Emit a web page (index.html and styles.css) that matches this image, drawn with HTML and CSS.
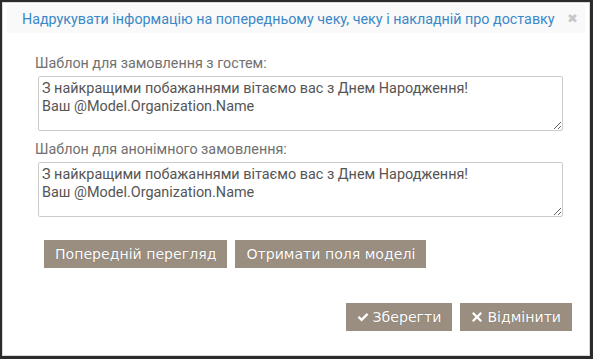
FILE: index.html
```html
<!DOCTYPE html>
<html lang="uk">
<head>
    <meta charset="UTF-8">
    <title>Друк інформації</title>
    <link rel="stylesheet" href="styles.css">
</head>
<body>
    <div class="modal">
        <div class="modal-header">
            <h4>Надрукувати інформацію на попередньому чеку, чеку і накладній про доставку</h4>
            <span class="close">&#x2716;</span>
        </div>

        <div class="modal-body">
            <div class="form-group">
                <label>Шаблон для замовлення з гостем:</label>
                <textarea>З найкращими побажаннями вітаємо вас з Днем Народження!
Ваш @Model.Organization.Name</textarea>
            </div>
            <div class="form-group">
                <label>Шаблон для анонімного замовлення:</label>
                <textarea>З найкращими побажаннями вітаємо вас з Днем Народження!
Ваш @Model.Organization.Name</textarea>
            </div>
            <div class="tools">
                <button class="btn">Попередній перегляд</button>
                <button class="btn">Отримати поля моделі</button>
            </div>
        </div>

        <div class="modal-footer">
            <button class="btn">
                <svg class="icon" viewBox="0 0 12 12"><path d="M0.6 6.6 L2.3 4.9 L4.6 7.2 L9.7 2 L11.4 3.7 L4.6 10.5 Z" fill="#fff"/></svg>Зберегти
            </button>
            <button class="btn">
                <svg class="icon" viewBox="0 0 12 12"><path d="M2.5 1 L6 4.4 L9.5 1 L11 2.5 L7.6 6 L11 9.5 L9.5 11 L6 7.6 L2.5 11 L1 9.5 L4.4 6 L1 2.5 Z" fill="#fff"/></svg>Відмінити
            </button>
        </div>
    </div>
</body>
</html>
```

FILE: styles.css
```css
body {
    margin: 0;
    background: #2b2b2b;
    font-family: Roboto, "Liberation Sans", sans-serif;
}
.modal {
    margin: 2px 2px 0 2px;
    width: 586px;
    height: 352px;
    background: #fff;
    border: 1px solid #d8d8d8;
    display: flex;
    flex-direction: column;
}
.modal-header {
    margin: 1px 4px 0 4px;
    height: 29px;
    background: #f9f9f9;
    padding: 0 7px 0 15px;
    display: flex;
    align-items: center;
    justify-content: space-between;
}
.modal-header h4 {
    margin: 0;
    font-size: 14.3px;
    font-weight: normal;
    white-space: nowrap;
    color: #3a88c8;
}
.close {
    color: #c8c8c8;
    font-size: 13px;
    font-family: "DejaVu Sans", sans-serif;
}
.modal-body {
    padding: 20px 26px 0 32px;
}
.form-group {
    margin-bottom: 8px;
}
.form-group label {
    display: block;
    font-size: 14.3px;
    line-height: 20px;
    color: #707070;
    margin-bottom: 3px;
}
.form-group textarea {
    display: block;
    box-sizing: border-box;
    margin-left: 3px;
    width: 525px;
    height: 55px;
    padding: 3px 3px;
    border: 1px solid #ccc;
    border-radius: 2px;
    font-family: Roboto, "Liberation Sans", sans-serif;
    font-size: 14.4px;
    line-height: 18px;
    color: #555;
    resize: vertical;
}
.tools {
    margin: 23px 0 0 9px;
    display: flex;
    gap: 8px;
}
.btn {
    background: #9a8e81;
    color: #fff;
    border: none;
    height: 28px;
    padding: 0 11px;
    font-family: "DejaVu Sans", Verdana, sans-serif;
    font-size: 14.1px;
    text-shadow: 0 0 1px rgba(0,0,0,0.3);
    display: flex;
    align-items: center;
}
.modal-footer {
    margin-top: auto;
    padding: 0 17px 24px 0;
    display: flex;
    justify-content: flex-end;
    gap: 8px;
}
.modal-footer .btn {
    padding: 0 11px;
}
.icon {
    width: 12px;
    height: 12px;
    margin-right: 4px;
}
```
